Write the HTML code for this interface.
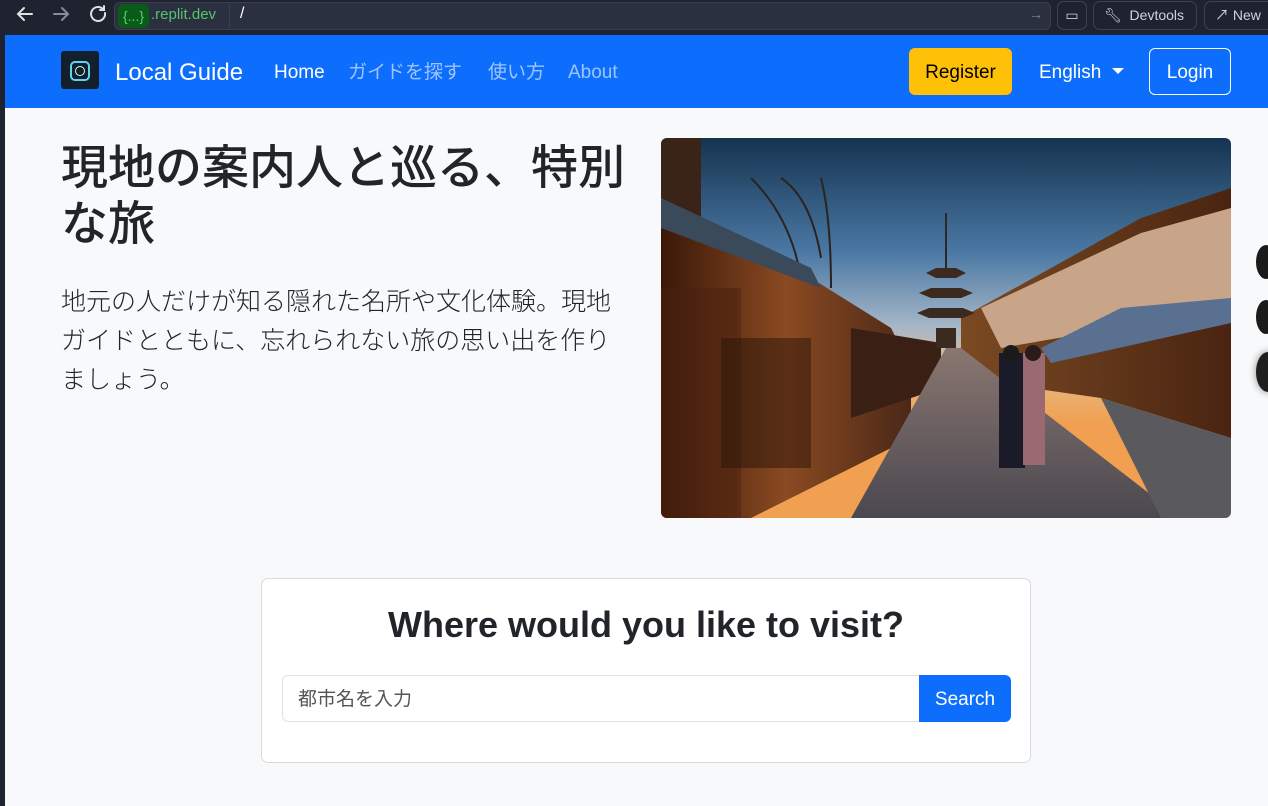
<!DOCTYPE html>
<html><head><meta charset="utf-8"><style>
*{box-sizing:border-box;margin:0;padding:0}
body{width:1268px;height:806px;overflow:hidden;background:#f8f9fa;font-family:"Liberation Sans","Noto Sans CJK JP",sans-serif;position:relative}
.chrome{position:absolute;left:0;top:0;width:1268px;height:35px;background:#1f2330}
.url{position:absolute;left:114px;top:2px;width:937px;height:28px;background:#2b3040;border-radius:6px;border:1px solid #3a3f50}
.tag{position:absolute;left:118px;top:4px;height:24px;width:31px;background:#0a5a1a;border-radius:5px;color:#55d46a;font-size:14px;line-height:24px;text-align:center}
.dom{position:absolute;left:151px;top:6px;color:#55c46a;font-size:15px}
.btn{position:absolute;top:1px;height:29px;border:1px solid #3d4252;border-radius:7px;color:#d0d3da;font-size:14px;line-height:27px}
.nav{position:absolute;left:5px;top:35px;width:1263px;height:73px;background:#0d6efd}
.nav a{position:absolute;top:26px;font-size:19px;line-height:24px;color:#fff;text-decoration:none;font-family:"Liberation Sans","Noto Sans CJK JP",sans-serif}
.left{position:absolute;left:0;top:35px;width:5px;height:771px;background:#1f2330}
h1{position:absolute;left:61px;top:140px;width:580px;font-size:47px;line-height:56px;font-weight:500;color:#212529}
.lead{position:absolute;left:61px;top:283px;width:565px;font-size:25px;line-height:39px;color:#212529;font-weight:300}
.card{position:absolute;left:261px;top:578px;width:770px;height:185px;background:#fff;border:1px solid #d8dadd;border-radius:7px}
</style></head><body>
<div class="chrome">
<svg width="110" height="30" style="position:absolute;left:10px;top:3px" fill="none" stroke-width="2" stroke-linecap="round"><path d="M22 11H8M14 5l-6 6 6 6" stroke="#e0e0e0"/><path d="M44 11h14M52 5l6 6-6 6" stroke="#8a8d96"/><path d="M93 6a7 7 0 1 0 2 4M94 3v4h-4" stroke="#e0e0e0"/></svg>
<div class="url"></div><div class="tag">{...}</div><div class="dom">.replit.dev</div>
<div style="position:absolute;left:229px;top:4px;width:1px;height:24px;background:#3a3f50"></div>
<div style="position:absolute;left:240px;top:5px;color:#fff;font-size:16px">/</div>
<div style="position:absolute;left:1029px;top:6px;color:#888;font-size:14px">→</div>
<div class="btn" style="left:1057px;width:30px;text-align:center">▭</div>
<div class="btn" style="left:1093px;width:104px;padding-left:10px">🔧︎&nbsp; Devtools</div>
<div class="btn" style="left:1204px;width:80px;padding-left:10px">↗ New</div>
</div>
<div class="left"></div>
<div class="nav">
<div style="position:absolute;left:56px;top:16px;width:38px;height:38px;background:#12202c;border-radius:3px"><div style="position:absolute;left:9px;top:10px;width:20px;height:20px;border:2px solid #6ad0f0;border-radius:5px"></div><div style="position:absolute;left:14px;top:15px;width:10px;height:10px;border:1.5px solid #cfe;border-radius:50%"></div></div>
<a style="left:110px;top:24px;font-size:24px;line-height:28px">Local Guide</a>
<a style="left:269px">Home</a>
<a style="left:343px;color:#9ec5fe">ガイドを探す</a>
<a style="left:483px;color:#9ec5fe">使い方</a>
<a style="left:563px;color:#9ec5fe">About</a>
<div style="position:absolute;left:904px;top:13px;width:103px;height:47px;background:#ffc107;border-radius:6px;color:#000;font-size:19px;text-align:center;line-height:49px">Register</div>
<a style="left:1034px">English <span style="display:inline-block;border-left:6px solid transparent;border-right:6px solid transparent;border-top:6px solid #fff;vertical-align:4px;margin-left:5px"></span></a>
<div style="position:absolute;left:1144px;top:13px;width:82px;height:47px;border:1px solid #fff;border-radius:6px;color:#fff;font-size:19px;text-align:center;line-height:47px">Login</div>
</div>
<h1>現地の案内人と巡る、特別な旅</h1>
<div class="lead">地元の人だけが知る隠れた名所や文化体験。現地ガイドとともに、忘れられない旅の思い出を作りましょう。</div>
<svg style="position:absolute;left:661px;top:138px;border-radius:6px" width="570" height="380" viewBox="0 0 570 380">
<defs><linearGradient id="sky" x1="0" y1="0" x2="0" y2="1"><stop offset="0" stop-color="#15334f"/><stop offset=".3" stop-color="#4a78a4"/><stop offset=".5" stop-color="#a8b8c8"/><stop offset=".62" stop-color="#e8b888"/><stop offset=".75" stop-color="#f0a050"/></linearGradient>
<linearGradient id="rd" x1="0" y1="0" x2="0" y2="1"><stop offset="0" stop-color="#8a7670"/><stop offset="1" stop-color="#4a4850"/></linearGradient>
<linearGradient id="lb" x1="0" y1="0" x2="1" y2="0"><stop offset="0" stop-color="#3a1808"/><stop offset=".5" stop-color="#8a4a22"/><stop offset="1" stop-color="#4a2818"/></linearGradient>
<linearGradient id="rb" x1="0" y1="0" x2="1" y2="0"><stop offset="0" stop-color="#7a4a22"/><stop offset="1" stop-color="#4a2412"/></linearGradient></defs>
<rect width="570" height="380" fill="url(#sky)"/>
<path d="M0 0H40V80L0 70Z" fill="#3a2418"/>
<path d="M120 40Q150 60 160 120M160 40Q170 80 170 150M90 40Q130 80 140 140" stroke="#2a2420" stroke-width="2" fill="none"/>
<path d="M0 65L150 140L230 190L250 230L250 300L90 380H0Z" fill="url(#lb)"/>
<path d="M0 60L150 130L160 150L0 90Z" fill="#3a4a5a"/>
<path d="M0 150H80V380H0Z" fill="#4a2010" opacity=".5"/>
<path d="M60 200h90v130h-90z" fill="#2a1408" opacity=".5"/>
<path d="M190 190L280 205L280 250L190 280Z" fill="#3a2014"/>
<path d="M300 180L480 80L570 50V300L440 260L300 240Z" fill="url(#rb)"/>
<path d="M320 170L480 95L570 70V170L340 210Z" fill="#c8a488"/>
<path d="M380 210L460 170L570 160V185L390 225Z" fill="#5a7090"/>
<path d="M275 130h20l10 5-10 5h-20l-10-5z M270 150h30l12 5-12 5h-30l-12-5z M268 170h34l12 5-12 5h-34l-12-5z M275 190h20v20h-20z" fill="#3a2a20"/>
<rect x="284" y="75" width="2" height="55" fill="#2a2a2a"/>
<path d="M190 380L285 210L300 210L520 380Z" fill="url(#rd)"/>
<path d="M440 260L570 300V380H500Z" fill="#5a5a5e"/>
<rect x="338" y="215" width="26" height="115" fill="#1a1a28"/><rect x="362" y="215" width="22" height="112" fill="#9a6a70"/>
<circle cx="350" cy="215" r="8" fill="#1a1a1a"/><circle cx="372" cy="215" r="8" fill="#2a1a1a"/>
</svg>
<div style="position:absolute;left:1256px;top:245px;width:20px;height:34px;background:#1a1a1a;border-radius:50%"></div>
<div style="position:absolute;left:1256px;top:300px;width:20px;height:34px;background:#1a1a1a;border-radius:50%"></div>
<div style="position:absolute;left:1256px;top:352px;width:24px;height:40px;background:#1e1e1e;border-radius:50%;box-shadow:0 0 8px #888"></div>
<div class="card">
<div style="position:absolute;left:0;width:100%;top:25px;text-align:center;font-size:36px;color:#212529;font-weight:bold">Where would you like to visit?</div>
<div style="position:absolute;left:20px;top:96px;width:638px;height:47px;border:1px solid #dee2e6;border-radius:6px 0 0 6px;font-size:19px;color:#555;line-height:47px;padding-left:15px">都市名を入力</div>
<div style="position:absolute;left:657px;top:96px;width:92px;height:47px;background:#0d6efd;border-radius:0 6px 6px 0;color:#fff;font-size:19px;line-height:49px;text-align:center">Search</div>
</div>
</body></html>
